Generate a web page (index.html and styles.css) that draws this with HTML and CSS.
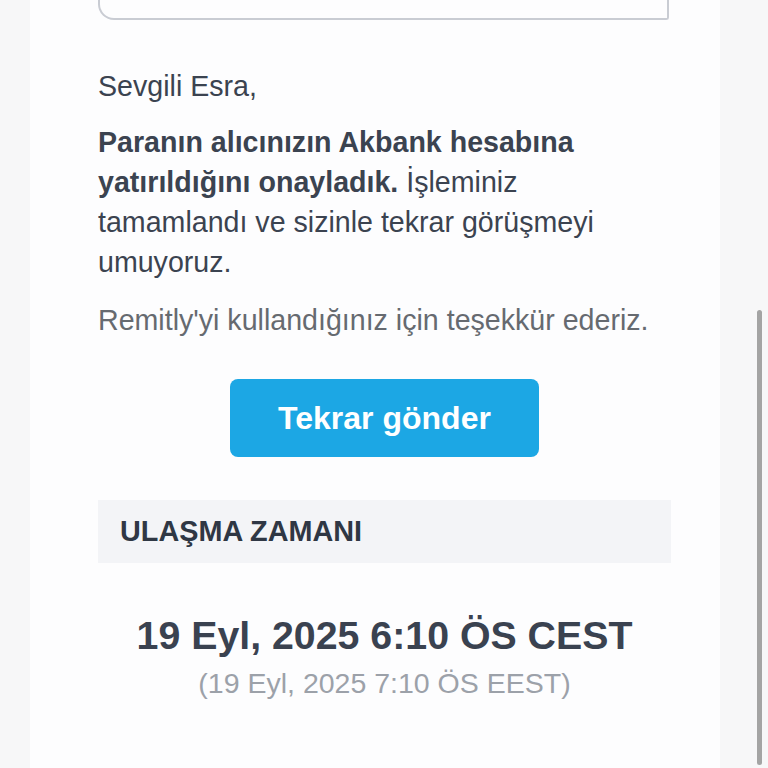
FILE: index.html
```html
<!DOCTYPE html>
<html lang="tr">
<head>
<meta charset="utf-8">
<link rel="stylesheet" href="styles.css">
</head>
<body>
<div class="page">
  <div class="card">
    <div class="topbox"></div>
    <p class="greet">Sevgili Esra,</p>
    <p class="msg"><strong>Paranın alıcınızın Akbank hesabına yatırıldığını onayladık.</strong> İşleminiz tamamlandı ve sizinle tekrar görüşmeyi umuyoruz.</p>
    <p class="thanks">Remitly'yi kullandığınız için teşekkür ederiz.</p>
    <div class="btnrow"><a class="btn">Tekrar gönder</a></div>
    <div class="sechead">ULAŞMA ZAMANI</div>
    <div class="time">
      <div class="main">19 Eyl, 2025 6:10 ÖS CEST</div>
      <div class="sub">(19 Eyl, 2025 7:10 ÖS EEST)</div>
    </div>
  </div>
</div>
<div class="scroll"></div>
</body>
</html>
```

FILE: styles.css
```css
html, body {
  margin: 0;
  height: 100%;
  background: #f7f7f8;
  font-family: "Liberation Sans", Arial, sans-serif;
  overflow: hidden;
}
.page {
  padding-left: 30px;
  width: 690px;
  height: 768px;
}
.card {
  background: #fdfdfe;
  height: 768px;
  padding: 0 49px 0 68px;
  color: #3b4350;
}
.topbox {
  height: 18px;
  width: 567px;
  border: 2px solid #c9ccd3;
  border-top: none;
  border-radius: 0 0 3px 16px;
}
.greet {
  margin: 46px 0 0;
  font-size: 28.6px;
  line-height: 40px;
}
.msg {
  margin: 16px 0 0;
  font-size: 28.6px;
  line-height: 40px;
}
.msg strong { font-weight: bold; }
.thanks {
  margin: 18px 0 0;
  font-size: 28.6px;
  line-height: 40px;
  color: #666a70;
}
.btnrow {
  display: flex;
  justify-content: center;
  margin-top: 39px;
}
.btn {
  width: 309px;
  height: 78px;
  border-radius: 8px;
  background: #1ca7e4;
  color: #fff;
  font-weight: bold;
  font-size: 32px;
  display: flex;
  align-items: center;
  justify-content: center;
}
.sechead {
  margin-top: 43px;
  height: 63px;
  background: #f3f4f7;
  display: flex;
  align-items: center;
  padding-left: 22px;
  font-weight: bold;
  font-size: 28.8px;
  color: #2f3744;
}
.time {
  margin-top: 49px;
  text-align: center;
}
.main {
  font-weight: bold;
  font-size: 39.3px;
  line-height: 46px;
  color: #3a4250;
}
.sub {
  font-size: 28.5px;
  line-height: 34px;
  color: #9ca1a9;
  margin-top: 8px;
}
.scroll {
  position: absolute;
  left: 757px;
  top: 310px;
  width: 5px;
  height: 455px;
  border-radius: 3px;
  background: #a4a4a4;
}
```
